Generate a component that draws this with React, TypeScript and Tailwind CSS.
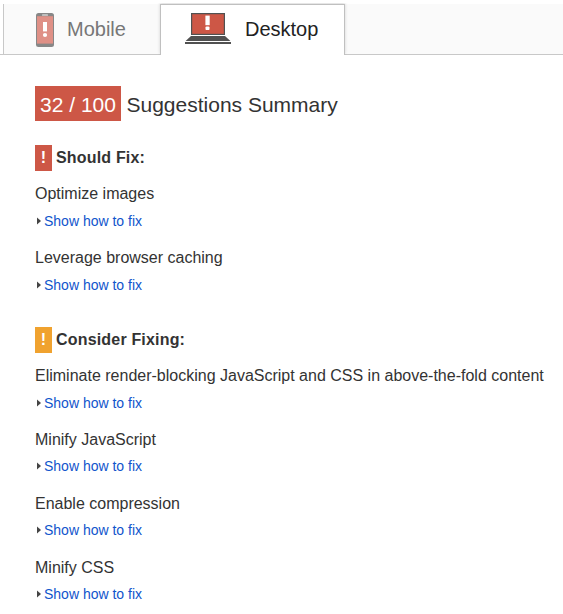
function PhoneIcon() {
  return (
    <svg width="18" height="34" viewBox="0 0 18 34" className="shrink-0">
      <rect x="0" y="0" width="18" height="34" rx="2.5" fill="#878787" />
      <rect x="1" y="3.2" width="16" height="27.4" fill="#df9086" />
      <rect x="6" y="1.5" width="6" height="1" rx="0.5" fill="#f5f5f5" />
      <path d="M7 9h4v9.4h-4z" fill="#fff" />
      <circle cx="9" cy="22" r="2.1" fill="#fff" />
    </svg>
  );
}

function LaptopIcon() {
  return (
    <svg width="46" height="31" viewBox="0 0 46 31" className="shrink-0">
      <rect x="6" y="0" width="34" height="22" fill="#515151" />
      <rect x="7.2" y="1.2" width="31.6" height="19.6" fill="#cd5746" />
      <path d="M20.4 2.6h4.3v9.6h-4.3z" fill="#fff" />
      <rect x="20.5" y="13.4" width="4" height="3.7" rx="1.2" fill="#fff" />
      <path d="M6 23h34l5.4 5H0.6z" fill="#515151" />
      <rect x="0" y="29" width="46" height="2" fill="#515151" />
    </svg>
  );
}

function Rule({ title, linkGap }: { title: string; linkGap: string }) {
  return (
    <li className="h-16">
      <div className="h-[18px] whitespace-nowrap text-[16px] leading-[18px] text-[#333]">{title}</div>
      <a className={`flex h-4 items-center text-[14px] leading-4 text-[#1155cc] ${linkGap}`}>
        <svg width="9" height="8" viewBox="0 0 9 8" className="shrink-0">
          <path d="M2 0.5l4 3.5-4 3.5z" fill="#444" />
        </svg>
        <span className="whitespace-nowrap">Show how to fix</span>
      </a>
    </li>
  );
}

function Group({ title, badge, rules }: { title: string; badge: string; rules: string[] }) {
  return (
    <section>
      <h3 className="flex h-[26px] items-center gap-1 text-[16px] font-bold text-[#333]">
        <span className={`flex h-[26px] w-[17px] items-center justify-center text-white ${badge}`}>!</span>
        <span className="tracking-[0.18px]">{title}</span>
      </h3>
      <ul className="mt-[14px]">
        {rules.map((rule, i) => (
          <Rule key={rule} title={rule} linkGap={rules.length > 2 && i > 0 ? 'mt-[9px]' : 'mt-[10px]'} />
        ))}
      </ul>
    </section>
  );
}

export default function App() {
  return (
    <div className="h-[614px] w-[563px] overflow-hidden bg-white font-['Liberation_Sans',Arial,sans-serif]">
      <nav className="mt-1 flex h-[51px]">
        <div className="w-[3px] border-b border-[#c8c8c8]" />
        <div className="flex w-[157px] items-start border-b border-l border-[#c8c8c8] bg-[#fafafa] pl-8">
          <div className="mt-[9px]">
            <PhoneIcon />
          </div>
          <span className="mt-[13px] ml-[13px] text-[20px] leading-6 text-[#777]">Mobile</span>
        </div>
        <div className="relative z-10 flex w-[185px] items-start border border-b-0 border-[#c0c0c0] bg-white pl-6 shadow-[0_-1px_3px_rgba(0,0,0,0.16)] [clip-path:inset(-1px_-4px_0_-4px)]">
          <div className="mt-2">
            <LaptopIcon />
          </div>
          <span className="mt-3 ml-[14px] text-[20px] leading-6 text-[#222]">Desktop</span>
        </div>
        <div className="flex-1 border-b border-[#c8c8c8] bg-[#fafafa]" />
      </nav>
      <main className="pt-[31px] pl-[35px]">
        <h2 className="flex h-[35px] items-center text-[21px] text-[#333]">
          <span className="flex h-[35px] w-[86px] items-center justify-center whitespace-nowrap bg-[#cd5746] pt-[2px] text-white">
            32 / 100
          </span>
          <span className="ml-[5.5px] pt-[2px] whitespace-nowrap">Suggestions Summary</span>
        </h2>
        <div className="mt-6 flex flex-col gap-[14px]">
          <Group title="Should Fix:" badge="bg-[#cd5746]" rules={['Optimize images', 'Leverage browser caching']} />
          <Group
            title="Consider Fixing:"
            badge="bg-[#f0a22f]"
            rules={[
              'Eliminate render-blocking JavaScript and CSS in above-the-fold content',
              'Minify JavaScript',
              'Enable compression',
              'Minify CSS',
            ]}
          />
        </div>
      </main>
    </div>
  );
}
